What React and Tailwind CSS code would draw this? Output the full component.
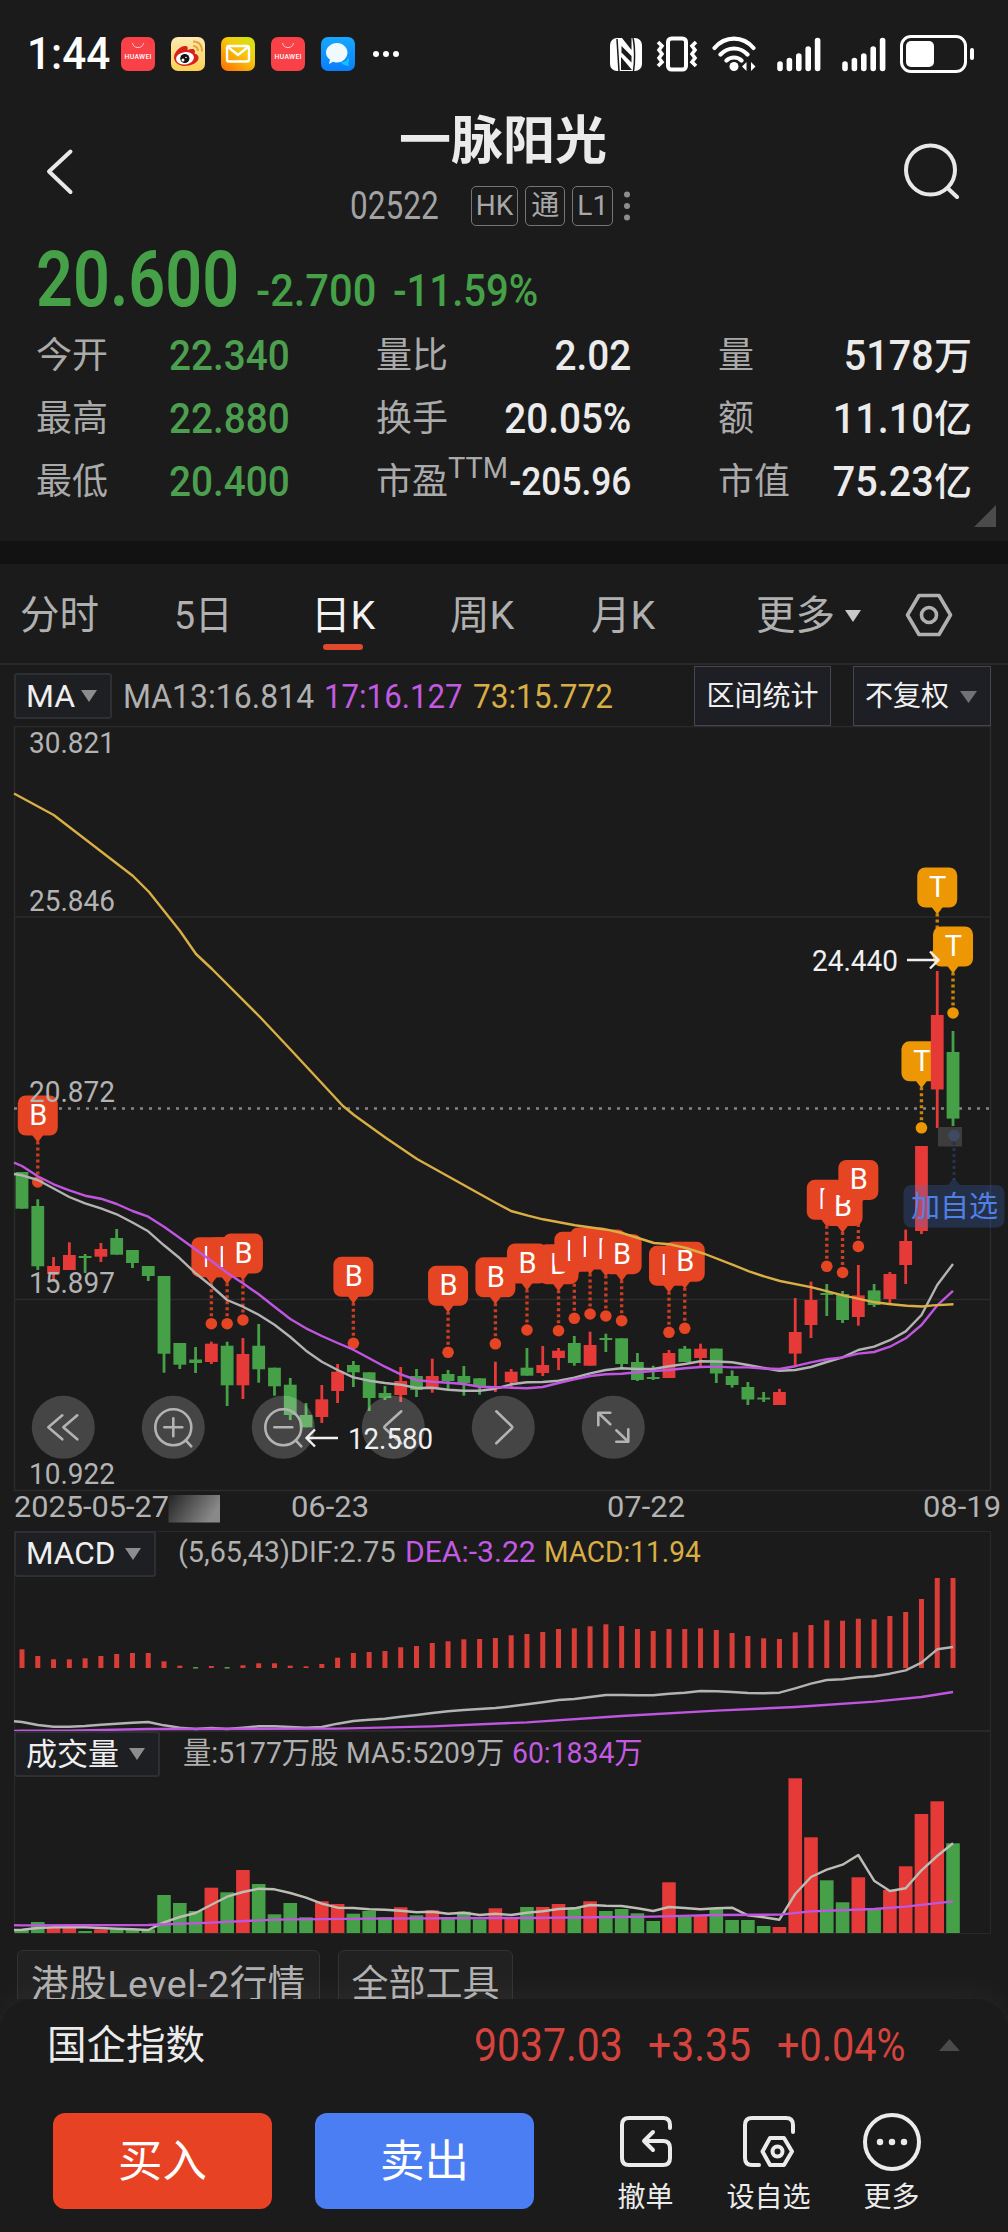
import clsx from "clsx";

const STEP = 15.78;
const cx = (i) => 22 + STEP * i;

// [open/close top, bottom, high, low, up]
const CANDLES = [
  [1172, 1208.7, 1172, 1208.7, 0], [1206, 1266.3, 1199.3, 1270, 0], [1266, 1274, 1257, 1279, 1],
  [1255, 1270, 1242.3, 1270, 1], [1256, 1258, 1254, 1273, 0], [1249, 1256.7, 1243, 1262, 1],
  [1238, 1254.7, 1229, 1254.7, 0], [1250, 1263, 1250, 1268, 0], [1266, 1276, 1266, 1281, 0],
  [1276, 1353.7, 1276, 1372.7, 0], [1343, 1364.7, 1343, 1369, 0], [1359.5, 1363, 1347, 1373, 0],
  [1343.7, 1362, 1341.7, 1364, 1], [1345.7, 1385.3, 1341.7, 1406, 0], [1354, 1385.3, 1338, 1399, 1],
  [1345.7, 1369.3, 1324, 1382.7, 0], [1367.7, 1386.3, 1367.7, 1395.7, 0], [1384.7, 1415, 1378, 1420, 0],
  [1415, 1427.3, 1403, 1427.3, 0], [1399.3, 1417, 1385, 1423, 1], [1371.7, 1391, 1364, 1403, 1],
  [1365, 1372.3, 1361, 1387, 0], [1372.3, 1398, 1372.3, 1411, 0], [1393, 1398, 1386, 1400, 0],
  [1381, 1395, 1367, 1402, 1], [1376, 1390, 1369, 1397, 0], [1376, 1388, 1358.7, 1392.7, 1],
  [1374, 1381, 1370, 1390, 0], [1376, 1383, 1366, 1395.7, 0], [1378.3, 1386.3, 1378.3, 1394.7, 0],
  [1386.5, 1388.5, 1361.7, 1392, 1], [1371.7, 1382.3, 1369, 1388, 1], [1367.7, 1375.7, 1348, 1375.7, 0],
  [1365, 1373, 1346, 1376, 1], [1350.7, 1358, 1348, 1370, 1], [1343, 1363, 1336, 1365.7, 0],
  [1345, 1365.7, 1331.7, 1365.7, 1], [1338, 1340, 1333.7, 1352, 0], [1338.3, 1364, 1338.3, 1369, 0],
  [1362, 1380, 1353, 1381, 0], [1377, 1379, 1365.7, 1380, 0], [1353, 1378, 1350, 1378, 1],
  [1348.7, 1362, 1346, 1362, 0], [1348.7, 1358, 1343.7, 1367, 1], [1348.6, 1373.5, 1348.6, 1383, 0],
  [1376, 1385, 1370.4, 1387.6, 0], [1387, 1399.5, 1382, 1405, 0], [1397.6, 1399.5, 1392, 1402, 0],
  [1392, 1405, 1388.8, 1405, 1], [1332, 1353.6, 1298, 1366, 1], [1300, 1325, 1281.6, 1338, 1],
  [1293, 1295, 1284, 1316, 0], [1294, 1320, 1291, 1323, 0], [1295.4, 1317, 1265, 1325.6, 1],
  [1290.4, 1305, 1284, 1307, 0], [1274, 1299, 1272, 1303, 1], [1241, 1265, 1229.6, 1284, 1],
  [1146, 1231, 1146, 1234, 1], [1015, 1089.5, 971, 1128, 1], [1052, 1118.6, 1031, 1126, 0],
];

const MA13 = [
  1175.3, 1180, 1188.5, 1197, 1203.3, 1208.3, 1214.3, 1222.5, 1231.3, 1245.3, 1258.3, 1273.3, 1286, 1300, 1306.7,
  1314.7, 1324.7, 1337, 1350.7, 1361.7, 1370, 1377.3, 1380.7, 1383, 1384.7, 1388, 1387.7, 1389.7, 1390.7, 1390.7,
  1388.7, 1384.3, 1382.3, 1382, 1380.7, 1377.7, 1373.3, 1370, 1368.3, 1369, 1369, 1366.3, 1364, 1361.3, 1361.5,
  1362.3, 1365, 1368, 1370.8, 1370, 1367, 1362, 1357.4, 1350, 1346.7, 1340.2, 1331.4, 1315, 1285, 1264,
];
const MA17 = [
  1166, 1176.3, 1184.3, 1190.3, 1195.7, 1198.7, 1204, 1211, 1216.7, 1226.7, 1238, 1249.5, 1261, 1272.7, 1283.3,
  1294.3, 1306.7, 1319, 1328.3, 1336, 1343, 1349.7, 1358.3, 1366.7, 1374.3, 1380, 1381.7, 1382.7, 1384, 1386.7,
  1387.3, 1387.7, 1388.3, 1387, 1383, 1379.3, 1376, 1374.3, 1373.7, 1372.3, 1371, 1370, 1368.3, 1367, 1366.6,
  1367.4, 1367.4, 1368.5, 1369, 1366.2, 1362.4, 1359.3, 1357.4, 1353.6, 1352, 1346.7, 1338.3, 1325, 1305.4, 1290.8,
];
const MA73 =
  "14,793.5 53.7,815 133,876 149,892 180,931 196,954 212,969 260,1017 291,1050 343,1106 354,1115 386,1138 417,1159 496,1203 511,1211 528,1215.7 543,1219.3 575,1225.3 607,1229.7 622,1233 638,1238 654,1243 670,1244.3 686,1248 705,1254 733,1264.8 749,1271.3 765,1276.7 780,1281 812,1287.4 843,1295.4 875,1302.3 891,1304.2 907,1305.8 922,1306.5 933,1305.4 953.5,1304.2";

// [candle index, y of the anchor dot]
const BUYS = [
  [1, 1182], [12, 1323.7], [13, 1323.7], [14, 1320], [21, 1343.3], [27, 1352.3], [30, 1343.8], [32, 1330],
  [34, 1330.7], [35, 1318.3], [36, 1314], [37, 1316], [38, 1320.7], [41, 1332.3], [42, 1328.3], [51, 1266.3],
  [52, 1272.5], [53, 1246.4],
];
const TRADES = [[57, 1127.8], [58, 954], [59, 1013]];

const MACD_BARS = [
  18.7, 12, 8.7, 8.7, 9.7, 12, 14, 15, 15, 6.7, 2.3, -1.6, 2, -1.6, 2.7, 4.7, 4.7, 2.3, 1.7, 4, 10.3, 15, 16, 17,
  20.7, 22, 25, 26.7, 28.7, 29, 30, 32.7, 34, 36, 39, 39.7, 41.7, 43.7, 42, 39, 37, 39, 39, 39.7, 38, 35, 32, 29.7,
  29, 35.7, 43, 47.7, 47.3, 49.3, 48.7, 52, 56, 69, 90.7, 90.7,
];
const DIF = [
  726, 735, 740, 740, 738, 734, 731, 728, 726, 736, 743, 747, 744, 747, 743, 739, 739, 741, 743, 741, 731, 723, 719,
  716, 710, 705, 699, 694, 690, 687, 684, 679, 673, 667, 660, 657, 651, 645, 645, 646, 646, 641, 638, 633, 634, 636,
  639, 640, 638, 625, 611, 600, 598, 592, 589, 581, 571, 548, 508, 501,
].map((v) => 1480 + v / 3);
const DEA = [[0, 752], [3, 752], [8, 747], [20, 746], [26, 739], [32, 727], [38, 708], [44, 692], [49, 681], [54, 665], [57, 651], [59, 636]]
  .map(([i, v]) => `${cx(i)},${1480 + v / 3}`)
  .join(" ");

const VOLUMES = [
  3.7, 11, 5.7, 5.7, 2, 3.7, 3.7, 3.7, 3.7, 38, 30, 22, 45.3, 40.7, 63, 49, 18.7, 30, 15.7, 31.7, 29, 19.3, 22, 15.7,
  25.7, 17.7, 22.7, 15.7, 21.3, 13.7, 24.7, 15.7, 26, 26, 29, 25.3, 31.7, 22, 24, 19.7, 12, 50.7, 16.3, 17.7, 24.7,
  13, 13, 7, 6, 154.7, 95.7, 52.7, 30.7, 55.7, 23.7, 43, 66.7, 119, 131.7, 89.7,
];
const VOLUME_UP = [2, 3, 5, 12, 14, 19, 20, 24, 26, 30, 31, 33, 34, 36, 41, 43, 48, 49, 50, 53, 55, 56, 57, 58];
const VOL_MA5 = [
  599, 594, 592, 592, 592, 594, 596, 598, 600, 577, 561, 549, 524, 500, 486, 476, 478, 489, 503, 521, 533, 534, 538,
  539, 542, 547, 545, 551, 548, 555, 551, 555, 548, 544, 537, 535, 525, 527, 528, 535, 543, 531, 534, 538, 535, 533,
  556, 562, 569, 492, 441, 419, 404, 375, 452, 483, 475, 421, 378, 340,
].map((v) => 1730 + v / 3);
const VOL_MA60 = [[0, 586], [8, 585], [12, 578], [16, 569], [22, 566], [32, 564], [40, 560], [44, 555], [48, 554], [50, 544], [54, 537], [56, 530], [59, 514]]
  .map(([i, v]) => `${cx(i)},${1730 + v / 3}`)
  .join(" ");

const RED = "#e53a38";
const GREEN = "#45a048";
const GRAY = "#b3b3b3";
const PURPLE = "#c056e0";
const YELLOW = "#d9ae45";

const toPoints = (first, values) =>
  `14,${first} ` + values.map((v, i) => `${cx(i).toFixed(1)},${v.toFixed(1)}`).join(" ");

function Line({ points, color, width = 2.4 }) {
  return <polyline points={points} fill="none" stroke={color} strokeWidth={width} strokeLinejoin="round" />;
}

function Marker({ i, y, label, color, boxHeight = 40 }) {
  const x = cx(i);
  const top = y - 86.5;
  const bottom = top + boxHeight;
  return (
    <g>
      <line x1={x} x2={x} y1={bottom + 6} y2={y - 5} stroke={color} strokeWidth="3.4" strokeDasharray="3 3" opacity="0.85" />
      <circle cx={x} cy={y} r="5.8" fill={color} />
      <rect x={x - 20} y={top} width="40" height={boxHeight} rx="8" fill={color} />
      <path d={`M${x - 6} ${bottom - 1}L${x} ${bottom + 7}L${x + 6} ${bottom - 1}Z`} fill={color} />
      <text x={x + 0.5} y={bottom - 10.5} fontSize="29" fill="#fff" textAnchor="middle">
        {label}
      </text>
    </g>
  );
}

function AxisText({ x, y, width, color = GRAY, size = 29, children }) {
  return (
    <text x={x} y={y} fontSize={size} fill={color} textLength={width} lengthAdjust="spacingAndGlyphs">
      {children}
    </text>
  );
}

function RoundButton({ x, children }) {
  return (
    <g transform={`translate(${x} 1427.3)`} fill="none" stroke={GRAY} strokeWidth="2.6" strokeLinecap="round" strokeLinejoin="round">
      <circle r="31.5" fill="#fff" fillOpacity="0.19" stroke="none" />
      {children}
    </g>
  );
}

function KLineChart() {
  return (
    <svg className="block w-full h-[805px]" viewBox="0 726 1008 805">
      <g stroke="#2b2b2c" strokeWidth="1.5" fill="none">
        <path d="M14.5 726V1490.5H990.5V726.5H14" />
        <path d="M14 917H990M14 1299.5H990" />
      </g>
      <line x1="14" x2="990" y1="1108.5" y2="1108.5" stroke="#858585" strokeWidth="2.6" strokeDasharray="3 6" />

      {BUYS.map(([i, y]) => (
        <Marker key={i} i={i} y={y} label="B" color="#e64524" />
      ))}
      {TRADES.map(([i, y]) => (
        <Marker key={i} i={i} y={y} label="T" color="#ec9703" />
      ))}

      {CANDLES.map(([top, bottom, high, low, up], i) => (
        <g key={i} fill={up ? RED : GREEN}>
          <rect x={cx(i) - 1.4} y={high} width="2.8" height={low - high} />
          <rect x={cx(i) - 6.4} y={top} width="12.8" height={bottom - top} />
        </g>
      ))}

      <Line points={toPoints(1174, MA13)} color={GRAY} />
      <Line points={toPoints(1162.7, MA17)} color={PURPLE} />
      <Line points={MA73} color={YELLOW} />

      <AxisText x={29} y={752.5} width={86}>30.821</AxisText>
      <AxisText x={29} y={911} width={86}>25.846</AxisText>
      <AxisText x={29} y={1102} width={86}>20.872</AxisText>
      <AxisText x={29} y={1293} width={86}>15.897</AxisText>
      <AxisText x={29} y={1484} width={86}>10.922</AxisText>

      <AxisText x={14} y={1517} width={155}>2025-05-27</AxisText>
      <AxisText x={291} y={1517} width={78}>06-23</AxisText>
      <AxisText x={607} y={1517} width={78}>07-22</AxisText>
      <AxisText x={923} y={1517} width={78}>08-19</AxisText>
      <defs>
        <linearGradient id="fade" x1="0" y1="0" x2="1" y2="0.35">
          <stop offset="0" stopColor="#242424" />
          <stop offset="1" stopColor="#898989" />
        </linearGradient>
      </defs>
      <rect x="168.5" y="1495" width="51.5" height="27.5" fill="url(#fade)" />

      <RoundButton x={63.3}>
        <path d="M-1-12L-15 0L-1 12M14-12L0 0L14 12" />
      </RoundButton>
      <RoundButton x={173.3}>
        <circle r="18" />
        <path d="M-9 0H9M0-9V9M12.5 13L18 19" />
      </RoundButton>
      <RoundButton x={283.3}>
        <circle r="18" />
        <path d="M-9 0H9M12.5 13L18 19" />
      </RoundButton>
      <RoundButton x={393.3}>
        <path d="M8-16L-8 -1.5Q-10 0 -8 1.5L8 16" />
      </RoundButton>
      <RoundButton x={503.3}>
        <path d="M-7-16L8 -1.5Q10 0 8 1.5L-7 16" />
      </RoundButton>
      <RoundButton x={613.3}>
        <path d="M-3-3L-14.500-14M-15-2V-14.500H-3M3 3L14.500 14M15 2V14.500H3" />
      </RoundButton>

      <g fill="none" stroke="#f0f0f0" strokeWidth="2.4">
        <path d="M338 1438H307M315 1429.5L306.5 1438L315 1446.5" />
        <path d="M907 960H938M930 951.5L938.5 960L930 968.5" />
      </g>
      <AxisText x={348} y={1449} width={85} color="#f0f0f0">12.580</AxisText>
      <AxisText x={812} y={971} width={86} color="#f0f0f0">24.440</AxisText>

      <rect x="938" y="1127" width="24" height="19.5" fill="#3d3d3e" />
      <circle cx="954" cy="1135.5" r="5.8" fill="#3f4961" />
      <line x1="954" x2="954" y1="1142" y2="1180" stroke="#26324f" strokeWidth="3" strokeDasharray="3 3" />
      <g fill="#4173d8" fillOpacity="0.24">
        <path d="M948 1185L954 1178L960 1185Z" />
        <rect x="903.5" y="1185" width="101" height="42.5" rx="8" />
      </g>
      <text x="911" y="1217" fontSize="29" fill="#5080e4">加自选</text>
    </svg>
  );
}

function MacdChart() {
  return (
    <svg className="block w-full h-[153px]" viewBox="0 1578 1008 153">
      {MACD_BARS.map((h, i) => (
        <rect key={i} x={cx(i) - 2.5} y={1668 - Math.max(h, 1)} width="5" height={Math.abs(h)} fill={h > 0 ? "#d93d37" : GREEN} />
      ))}
      <Line points={toPoints(1721.3, DIF)} color={GRAY} />
      <Line points={`14,1731 ${DEA}`} color={PURPLE} />
    </svg>
  );
}

function VolumeChart() {
  return (
    <svg className="block w-full h-[156px]" viewBox="0 1778 1008 156">
      {VOLUMES.map((h, i) => {
        const x = i ? cx(i) - 6.8 : 14.5;
        return (
          <rect key={i} x={x} y={1933 - h} width={cx(i) + 6.8 - x} height={h} fill={VOLUME_UP.includes(i) ? RED : GREEN} />
        );
      })}
      <Line points={toPoints(1930, VOL_MA5)} color="#bdbdb5" />
      <Line points={`14,1925.3 ${VOL_MA60}`} color={PURPLE} />
    </svg>
  );
}

// Keeps the condensed digits inside a box of known width
function Num({ className, inner, children }) {
  return (
    <span className={clsx("inline-block shrink-0 whitespace-nowrap", className)}>
      <span className={clsx("inline-block origin-left", inner)}>{children}</span>
    </span>
  );
}

function Caret({ className }) {
  return (
    <svg className={className} viewBox="0 0 16 12" preserveAspectRatio="none">
      <path d="M0 0H16L8 12Z" fill="currentColor" />
    </svg>
  );
}

function HuaweiIcon() {
  return (
    <svg className="size-[34px]" viewBox="0 0 34 34">
      <rect width="34" height="34" rx="7" fill="#fb4148" />
      <path d="M11.5 6a5.6 5.6 0 0 0 11 0" fill="none" stroke="#ffc4c4" strokeWidth="1" />
      <text x="17" y="22" fontSize="6.8" fontWeight="500" fill="#fff" textAnchor="middle" textLength="27">
        HUAWEI
      </text>
    </svg>
  );
}

function Signal() {
  return (
    <svg className="w-[44px] h-[35px]" viewBox="0 0 44 35" stroke="#fff" strokeWidth="5.6" strokeLinecap="round">
      <path d="M3 27V31.5M12.4 23.5V31.5M21.8 19V31.5M31.2 12V31.5M40.6 3.5V31.5" />
    </svg>
  );
}

function StatusBar() {
  return (
    <div className="flex items-center h-[108px] pl-[27px] pr-[34px] text-white">
      <Num className="w-[94px] text-[44px] font-medium" inner="scale-x-[.96]">1:44</Num>
      <div className="flex items-center gap-4">
        <HuaweiIcon />
        <svg className="size-[34px]" viewBox="0 0 34 34">
          <defs>
            <linearGradient id="weibo" x1="0" y1="0" x2="0" y2="1">
              <stop offset="0" stopColor="#fdeab4" />
              <stop offset="1" stopColor="#fdd253" />
            </linearGradient>
          </defs>
          <rect width="34" height="34" rx="7" fill="url(#weibo)" />
          <path d="M3 20C3 15 10 8 15 9c2 .5 2 2 1.500 4 3-1.300 7-2 7.500 1 0 1-.3 2-.5 2.500 3 1 4.500 2.500 4 5C27 26 20 29 13 29 7 28.500 3 25 3 20Z" fill="#d8201c" />
          <ellipse cx="14" cy="21.300" rx="9" ry="6.200" fill="#fff" transform="rotate(-8 14 21.300)" />
          <circle cx="13.800" cy="21.500" r="4.600" fill="#111" />
          <circle cx="12" cy="23" r="1.500" fill="#fff" />
          <circle cx="15" cy="20.500" r=".8" fill="#fff" />
          <path d="M22 4.500c6 0 9 4 9 10M22 9c3.500 0 5 2 5 5" fill="none" stroke="#eaa13a" strokeWidth="2" />
        </svg>
        <svg className="size-[34px]" viewBox="0 0 34 34">
          <defs>
            <linearGradient id="mail" x1="1" y1="0" x2="0.200" y2="1">
              <stop offset="0" stopColor="#cdea12" />
              <stop offset="0.450" stopColor="#f5c90d" />
              <stop offset="1" stopColor="#ff7a05" />
            </linearGradient>
          </defs>
          <rect width="34" height="34" rx="7" fill="url(#mail)" />
          <rect x="6" y="9" width="22" height="15.500" rx="2" fill="none" stroke="#fff" strokeWidth="2.400" />
          <path d="M7 10L17 18L27 10" fill="none" stroke="#fff" strokeWidth="2.400" />
        </svg>
        <HuaweiIcon />
        <svg className="size-[34px]" viewBox="0 0 34 34">
          <defs>
            <linearGradient id="chat" x1="0" y1="0" x2="0" y2="1">
              <stop offset="0" stopColor="#17a8ff" />
              <stop offset="1" stopColor="#0b7dfd" />
            </linearGradient>
          </defs>
          <rect width="34" height="34" rx="7" fill="url(#chat)" />
          <path d="M20 25c4 1 8-3 8-6 0 3 .5 6-1 7l1 3c-2 0-6-.5-8-4Z" fill="#10c6ff" />
          <path d="M16 6c6 0 10.500 4.500 10.500 9.500S22 25.500 16 25.500c-1.500 0-3-.3-4-.7L8 27l1-4.500C6.500 21 5 18.500 5 15.500 5 10.500 10 6 16 6Z" fill="#eefaff" />
        </svg>
      </div>
      <svg className="ml-[17px] w-[28px] h-[8px]" viewBox="0 0 28 8" fill="#fff">
        <circle cx="4" cy="4" r="3" />
        <circle cx="14" cy="4" r="3" />
        <circle cx="24" cy="4" r="3" />
      </svg>

      <div className="ml-auto flex items-center">
        <svg className="w-[32px] h-[33px]" viewBox="0 0 32 33">
          <rect width="32" height="33" rx="7" fill="#fff" />
          <path d="M7 1L9 33M23 0C25 8 25 24 23.500 33" fill="none" stroke="#1b1b1b" strokeWidth="1.500" />
          <path d="M11.500 8L21.500 18V24.500L11.500 14.500Z" fill="#1b1b1b" />
          <path d="M11 19L22 32H11ZM12 0H21.500V12Z" fill="#1b1b1b" />
        </svg>
        <svg className="ml-[14px] w-[42px] h-[36px]" viewBox="0 0 42 36" fill="none" stroke="#fff">
          <rect x="12" y="2.500" width="18" height="31" rx="3.500" strokeWidth="4" />
          <path d="M2 6l4 4-3 4 3 4-3 4 3 4-4 4M40 6l-4 4 3 4-3 4 3 4-3 4 4 4" strokeWidth="3.600" />
        </svg>
        <svg className="ml-[14px] w-[44px] h-[36px]" viewBox="0 0 44 36" fill="none" stroke="#fff" strokeWidth="4.200" strokeLinecap="round">
          <path d="M2.500 12C13-.5 31-.5 41.500 12M8.500 18.500c7.500-8 19.500-8 27 0M14.500 24.500c4-4 11-4 15 0" />
          <circle cx="22" cy="30.500" r="4.500" fill="#fff" stroke="none" />
          <path d="M34.500 26v9L30 30.500ZM39 26v9L43.500 30.500Z" fill="#fff" stroke="none" />
        </svg>
        <div className="ml-[21px] flex gap-[21px]">
          <Signal />
          <Signal />
        </div>
        <div className="ml-[14px] h-[38px] w-[67px] rounded-[11px] border-[3px] border-white p-[3px]">
          <div className="h-[26px] w-[28px] rounded-[5px] bg-white" />
        </div>
        <div className="ml-[3px] h-[12px] w-[4px] rounded-full bg-white" />
      </div>
    </div>
  );
}

function Tag({ children }) {
  return (
    <span className="flex h-[40px] min-w-[40px] items-center justify-center rounded-[5px] border-[1.5px] border-[#757575] px-[4px] text-[28px] leading-none text-[#a8a8a8]">
      {children}
    </span>
  );
}

function Header() {
  return (
    <div className="flex h-[128px] justify-between pl-[46px] pr-[48px]">
      <svg className="mt-[40px] w-[30px] h-[48px]" viewBox="0 0 30 48" fill="none" stroke="#e8e8e8" strokeWidth="4" strokeLinecap="round" strokeLinejoin="round">
        <path d="M24.500 3.500L3 23.500L24.500 44" />
      </svg>
      <div className="flex flex-col items-center">
        <h1 className="mt-[4px] h-[73px] text-[52px] leading-[60px] font-bold text-[#ebebeb] translate-x-[13px]">一脉阳光</h1>
        <div className="flex h-[42px] items-center text-[#a3a3a3]">
          <Num className="w-[121px] text-[38px] leading-none" inner="scale-x-[.83]">02522</Num>
          <div className="flex gap-[7px]">
            <Tag>HK</Tag>
            <Tag>通</Tag>
            <Tag>L1</Tag>
          </div>
          <svg className="ml-[11px] w-[6px] h-[30px]" viewBox="0 0 6 30" fill="#8d8d8d">
            <circle cx="3" cy="3.500" r="3" />
            <circle cx="3" cy="15" r="3" />
            <circle cx="3" cy="26.500" r="3" />
          </svg>
        </div>
      </div>
      <svg className="mt-[35px] size-[56px]" viewBox="0 0 56 56" fill="none" stroke="#e8e8e8" strokeWidth="4" strokeLinecap="round">
        <circle cx="26.500" cy="27" r="24.500" />
        <path d="M43.500 45L53 54" />
      </svg>
    </div>
  );
}

const STATS = [
  ["今开", "22.340", "量比", "2.02", "量", "5178", "万"],
  ["最高", "22.880", "换手", "20.05%", "额", "11.10", "亿"],
  ["最低", "20.400", "市盈", "-205.96", "市值", "75.23", "亿"],
];

function Quote() {
  return (
    <div className="h-[305px] px-[36px] text-[#aaaaaa]">
      <div className="flex h-[88px] items-baseline text-[#45a048]">
        <Num className="w-[220px] text-[77px] leading-[88px] font-semibold" inner="scale-x-[.84]">20.600</Num>
        <Num className="w-[137px] text-[45px] font-medium" inner="scale-x-[.925]">-2.700</Num>
        <Num className="text-[45px] font-medium" inner="scale-x-[.89]">-11.59%</Num>
      </div>
      {STATS.map((row) => (
        <div key={row[0]} className="flex h-[63px] items-center text-[36px] leading-none">
          <span className="w-[133px]">{row[0]}</span>
          <Num className="w-[207px] text-[43px] font-medium text-[#4d9f50]" inner="scale-x-[.9]">{row[1]}</Num>
          <div className="flex w-[255px] items-center justify-between">
            <span className="whitespace-nowrap">
              {row[2]}
              {row[2] === "市盈" && <sup className="relative -top-[16px] text-[29px]">TTM</sup>}
            </span>
            <span
              className={clsx(
                "-ml-8 inline-block origin-right font-medium text-[#ebebeb]",
                row[2] === "市盈" ? "scale-x-[.93] text-[38px]" : "scale-x-[.9] text-[43px]"
              )}
            >
              {row[3]}
            </span>
          </div>
          <div className="ml-[87px] flex flex-1 items-center justify-between">
            <span>{row[4]}</span>
            <span className="flex items-center font-medium text-[#ebebeb]">
              <span className="inline-block origin-right scale-x-[.92] text-[43px]">{row[5]}</span>
              <span className="text-[38px]">{row[6]}</span>
            </span>
          </div>
        </div>
      ))}
      <svg className="-mr-[24px] ml-auto -mt-[8px] size-[22px]" viewBox="0 0 22 22">
        <path d="M22 0V22H0Z" fill="#4b4b4b" />
      </svg>
    </div>
  );
}

function Tabs() {
  return (
    <div className="flex h-[101px] items-center border-b-2 border-[#29292a] pt-[5px] pl-[20px] text-[39.5px] leading-none text-[#b0b0b0]">
      <span className="w-[154px]">分时</span>
      <Num className="w-[137px]" inner="scale-x-[.95]">5日</Num>
      <div className="relative w-[139px] text-[#f2f2f2]">
        <span className="inline-block">日K</span>
        <div className="absolute -bottom-[14px] left-[12px] h-[6px] w-[40px] rounded-full bg-[#e0492c]" />
      </div>
      <span className="w-[141px]">周K</span>
      <span className="w-[165px]">月K</span>
      <span>更多</span>
      <Caret className="ml-[10px] h-[12px] w-[16px] text-[#c8c8c8]" />
      <svg className="-mt-[3px] ml-[44px] w-[48px] h-[44px]" viewBox="0 0 48 44" fill="none" stroke="#b0b0b0" strokeWidth="3.600" strokeLinejoin="round">
        <path d="M14 2.500H34L45.500 22L34 41.500H14L2.500 22Z" />
        <circle cx="24" cy="22" r="7.500" />
      </svg>
    </div>
  );
}

function Dropdown({ className, children }) {
  return (
    <div className={clsx("flex h-[46px] items-center justify-between rounded-[3px] border-2 border-[#2e2f33] bg-[#1e1f23] text-[#efefef] leading-none", className)}>
      {children}
      <Caret className="h-[12px] w-[16px] text-[#8d8d8d]" />
    </div>
  );
}

function MaBar() {
  return (
    <div className="flex h-[61px] items-center pl-[14px] text-[33px] leading-none">
      <Dropdown className="w-[98px] pl-[10px] pr-[13px]">
        <span className="text-[32px]">MA</span>
      </Dropdown>
      <Num className="ml-[11px] mt-[2px] w-[201px] text-[#b0b0b0]" inner="scale-x-[.97]">MA13:16.814</Num>
      <Num className="mt-[2px] w-[149px] text-[#c35ae2]" inner="scale-x-[.945]">17:16.127</Num>
      <Num className="mt-[2px] w-[221px] text-[#d9ae45]" inner="scale-x-[.955]">73:15.772</Num>
      <div className="flex h-[60px] w-[137px] items-center justify-center border-[1.5px] border-[#45464e] bg-[#1e1f24] pt-[2px] text-[28px] text-[#f0f0f0]">
        区间统计
      </div>
      <div className="ml-[22px] flex h-[60px] w-[138px] items-center justify-between border-[1.5px] border-[#45464e] bg-[#1e1f24] pt-[2px] pl-[11px] pr-[13px] text-[28px] text-[#f0f0f0]">
        不复权
        <Caret className="h-[12px] w-[17px] text-[#707275]" />
      </div>
    </div>
  );
}

function Panel({ title, titleClass, children, chart }) {
  return (
    <div className="relative">
      <div className="absolute inset-y-0 left-[14px] right-[17px] border-[1.5px] border-[#29292a]" />
      <div className="relative flex h-[47px] items-start pl-[14px] text-[29.5px] leading-none">
        <Dropdown className={titleClass}>{title}</Dropdown>
        {children}
      </div>
      <div className="relative">{chart}</div>
    </div>
  );
}

function Action({ label, children }) {
  return (
    <div className="flex w-[123px] flex-col items-center">
      <svg className="h-[60px] w-[60px]" viewBox="0 0 60 60" fill="none" stroke="#ebebeb" strokeWidth="4" strokeLinecap="round" strokeLinejoin="round">
        {children}
      </svg>
      <span className="mt-[11px] text-[28px] leading-none text-[#ebebeb]">{label}</span>
    </div>
  );
}

function BottomSheet() {
  return (
    <div className="relative h-[233px] rounded-t-[32px] bg-[#1b1b1b] shadow-[0_-4px_36px_rgba(255,255,255,0.05)]">
      <div className="flex h-[94px] items-center pl-[47px] pr-[48px] text-[46px] leading-none text-[#d5433e]">
        <span className="text-[39.5px] text-[#ebebeb]">国企指数</span>
        <Num className="ml-auto -mt-[3px] w-[174px]" inner="scale-x-[.89]">9037.03</Num>
        <Num className="-mt-[3px] w-[129px]" inner="scale-x-[.89]">+3.35</Num>
        <Num className="-mt-[3px] w-[162px]" inner="scale-x-[.86]">+0.04%</Num>
        <Caret className="-mt-[3px] h-[12px] w-[21px] rotate-180 text-[#4a4a4a]" />
      </div>
      <div className="flex pl-[53px] pt-[20px]">
        <button className="h-[96px] w-[219px] rounded-xl bg-[#e84225] pt-[3px] text-[44.5px] text-white">买入</button>
        <button className="ml-[43px] h-[96px] w-[219px] rounded-xl bg-[#4c7ef3] pt-[3px] text-[44.5px] text-white">卖出</button>
        <div className="ml-[50px] flex">
          <Action label="撤单">
            <path d="M54 15V12Q54 5 47 5H13Q6 5 6 12V45Q6 52 13 52H47Q54 52 54 45V35Q54 28 47 28H28M37 19L28 28L37 37" />
          </Action>
          <Action label="设自选">
            <path d="M54 19V12Q54 5 47 5H13Q6 5 6 12V45Q6 52 13 52H20M31 25H45L53 38.500L45 52H31L23.500 38.500Z" />
            <circle cx="38.500" cy="38.500" r="5" />
          </Action>
          <Action label="更多">
            <circle cx="30" cy="29" r="27" />
            <path d="M18 29h0M30 29h0M42 29h0" strokeWidth="6.500" />
          </Action>
        </div>
      </div>
    </div>
  );
}

export default function App() {
  return (
    <div className="h-[2232px] w-[1008px] overflow-hidden bg-[#1b1b1b] font-['Roboto','Noto_Sans_CJK_SC',sans-serif]">
      <StatusBar />
      <Header />
      <Quote />
      <div className="h-[23px] bg-[#121212]" />
      <Tabs />
      <MaBar />
      <KLineChart />

      <Panel title={<span className="text-[31.5px]">MACD</span>} titleClass="w-[142px] pl-[10px] pr-[13px]" chart={<MacdChart />}>
        <Num className="ml-[22px] mt-[7px] w-[227px] text-[#b0b0b0]" inner="scale-x-[.975]">(5,65,43)DIF:2.75</Num>
        <Num className="mt-[7px] w-[139px] text-[#c35ae2]" inner="scale-x-[1.02]">DEA:-3.22</Num>
        <Num className="mt-[7px] text-[#d9ae45]" inner="scale-x-[.95]">MACD:11.94</Num>
      </Panel>
      <Panel title={<span className="text-[31px]">成交量</span>} titleClass="w-[146px] pl-[10px] pr-[13px]" chart={<VolumeChart />}>
        <Num className="ml-[23px] mt-[8px] w-[163px] text-[#b0b0b0]" inner="scale-x-[.96]">量:5177万股</Num>
        <Num className="mt-[8px] w-[166px] text-[#b0b0b0]" inner="scale-x-[.96]">MA5:5209万</Num>
        <Num className="mt-[8px] text-[#c35ae2]" inner="scale-x-[.96]">60:1834万</Num>
      </Panel>

      <div className="mt-[16px] flex h-[49px] gap-[18px] overflow-hidden pl-[17px] text-[37px] leading-none text-[#b0b0b0]">
        <div className="h-[70px] w-[303px] rounded-md border-[1.5px] border-[#323232] bg-[#212121] pt-[15px] text-center text-[37.5px] tracking-[0.6px] whitespace-nowrap">
          港股Level-2行情
        </div>
        <div className="h-[70px] w-[175px] rounded-md border-[1.5px] border-[#323232] bg-[#212121] pt-[15px] text-center">全部工具</div>
      </div>
      <BottomSheet />
    </div>
  );
}
